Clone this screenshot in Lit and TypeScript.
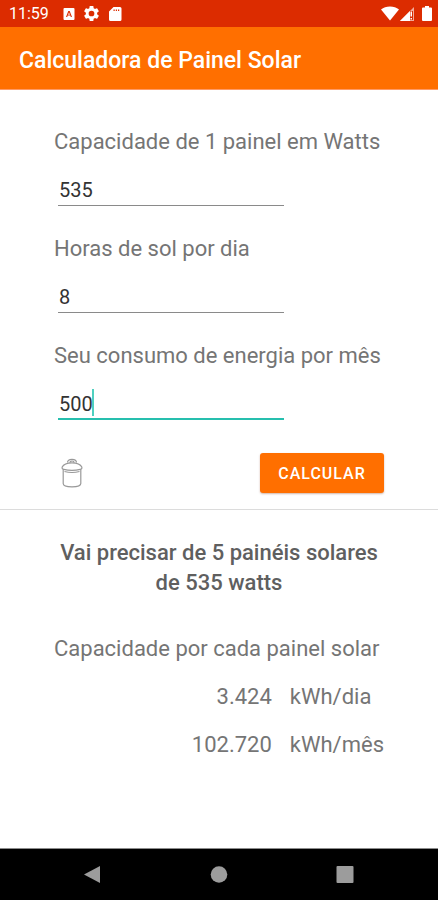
import { LitElement, html, css, svg } from "lit";
import { customElement, state } from "lit/decorators.js";

interface Field {
  id: string;
  label: string;
  value: string;
}

@customElement("status-bar")
class StatusBar extends LitElement {
  static styles = css`
    :host {
      display: flex;
      align-items: center;
      height: 27px;
      padding: 0 6px 0 9px;
      background: #dc2c00;
      color: #fff;
      font-size: 16px;
      line-height: 29px;
    }
    .notes {
      display: flex;
      align-items: center;
      gap: 9px;
      margin-left: 14px;
    }
    .signals {
      display: flex;
      align-items: center;
      margin-left: auto;
    }
    svg {
      display: block;
    }
    .battery {
      margin-left: 7px;
    }
  `;

  render() {
    return html`
      <span>11:59</span>
      <div class="notes">
        <svg width="12" height="14" viewBox="0 0 12 14">
          <path fill="#fff" fill-rule="evenodd" d="M1.500 1h9A1 1 0 0 1 11.500 2v10a1 1 0 0 1-1 1h-9A1 1 0 0 1 .5 12V2a1 1 0 0 1 1-1zM5.300 4 3 10h1.200l.5-1.400h2.600L7.800 10H9L6.700 4zM6 5.300l.9 2.400H5.100z" />
        </svg>
        <svg width="15" height="15" viewBox="2 2 20 20">
          <path fill="#fff" fill-rule="evenodd" d="M19.430 12.980c.04-.32.07-.64.07-.98s-.03-.66-.07-.98l2.110-1.650c.19-.15.24-.42.12-.64l-2-3.460c-.12-.22-.39-.3-.61-.22l-2.490 1c-.52-.4-1.080-.73-1.690-.98l-.38-2.650C14.460 2.180 14.250 2 14 2h-4c-.25 0-.46.18-.49.42l-.38 2.650c-.61.25-1.170.59-1.690.98l-2.490-1c-.23-.09-.49 0-.61.22l-2 3.460c-.13.22-.07.49.12.64l2.110 1.650c-.04.32-.07.65-.07.98s.03.66.07.98l-2.110 1.650c-.19.15-.24.42-.12.64l2 3.460c.12.22.39.3.61.22l2.490-1c.52.4 1.080.73 1.690.98l.38 2.650c.03.24.24.42.49.42h4c.25 0 .46-.18.49-.42l.38-2.650c.61-.25 1.170-.59 1.690-.98l2.490 1c.23.09.49 0 .61-.22l2-3.460c.12-.22.07-.49-.12-.64zM12 15.800a3.800 3.800 0 1 1 0-7.600 3.800 3.800 0 0 1 0 7.600z" />
        </svg>
        <svg width="14" height="16" viewBox="0 0 14 16">
          <path fill="#fff" fill-rule="evenodd" d="M5.500 1H12a1.500 1.500 0 0 1 1.500 1.500v11A1.500 1.500 0 0 1 12 15H2.500A1.500 1.500 0 0 1 1 13.500V5.500zM5.500 3.500V5h1.200V3.500zM7.800 3.500V5H9V3.500zM10 3.500V5h1.200V3.500z" />
        </svg>
      </div>
      <div class="signals">
        <svg width="18" height="15" viewBox="0 0 18 15">
          <path fill="#fff" d="M9 14.500 0 3.600C2.400 1.500 5.500.5 9 .5s6.600 1 9 3.100z" />
        </svg>
        <svg width="16" height="15" viewBox="0 0 16 15">
          <path fill="#fff" fill-opacity=".6" d="M15 1v14H1z" />
          <path fill="#fff" d="M11 5v10H1z" />
          <path fill="#dc2c00" d="M11 5h3v9h-3z" />
          <path fill="#fff" d="M11.500 5.500H13v5h-1.500zM11.500 12H13v1.500h-1.500z" />
        </svg>
        <svg class="battery" width="10" height="15" viewBox="0 0 10 15">
          <path fill="#fff" d="M3 0h4v1.500h2a1 1 0 0 1 1 1V14a1 1 0 0 1-1 1H1a1 1 0 0 1-1-1V2.500a1 1 0 0 1 1-1h2z" />
        </svg>
      </div>
    `;
  }
}

@customElement("nav-bar")
class NavBar extends LitElement {
  static styles = css`
    :host {
      display: flex;
      justify-content: center;
      gap: 86px;
      height: 51px;
      border-top: 1px solid #8c8c8c;
      background: #000;
    }
    button {
      display: flex;
      align-items: center;
      justify-content: center;
      width: 40px;
      padding: 0;
      border: 0;
      background: none;
    }
  `;

  render() {
    const shapes = [
      { name: "Voltar", shape: svg`<path d="M0 9.500 16 1v17z" />` },
      { name: "Início", shape: svg`<circle cx="9" cy="9.500" r="8.300" />` },
      { name: "Recentes", shape: svg`<rect x="0.500" y="1" width="17" height="17" rx="1" />` },
    ];
    return shapes.map(
      (s) => html`<button aria-label=${s.name}>
        <svg width="18" height="19" viewBox="0 0 18 19" fill="#9c9c9c">${s.shape}</svg>
      </button>`
    );
  }
}

@customElement("app-root")
class AppRoot extends LitElement {
  @state() private fields: Field[] = [
    { id: "capacidade", label: "Capacidade de 1 painel em Watts", value: "535" },
    { id: "horas", label: "Horas de sol por dia", value: "8" },
    { id: "consumo", label: "Seu consumo de energia por mês", value: "500" },
  ];
  @state() private active = "consumo";

  static styles = css`
    :host {
      display: flex;
      flex-direction: column;
      min-height: 100vh;
      background: #fff;
      color: #757575;
      font-family: Roboto, "Liberation Sans", sans-serif;
    }
    h1 {
      margin: 0;
      padding: 5px 19px 0;
      background: #ff6f00;
      border-bottom: 1px solid #ff9a66;
      color: #fff;
      font-size: 23px;
      font-weight: 500;
      line-height: 57px;
    }
    main {
      flex: 1;
    }
    form {
      padding: 37px 54px 16px;
      border-bottom: 1px solid #dcdcdc;
    }
    .field {
      display: flex;
      flex-direction: column;
      gap: 15px;
      margin-bottom: 28px;
    }
    label,
    .results {
      font-size: 22px;
      font-weight: 400;
      line-height: 30px;
    }
    label {
      white-space: nowrap;
    }
    .entry {
      position: relative;
      width: 226px;
      margin-left: 4px;
    }
    input {
      display: block;
      box-sizing: border-box;
      width: 100%;
      height: 34px;
      padding: 2px 0 0 1px;
      border: 0;
      border-bottom: 1px solid #8a8a8a;
      outline: 0;
      background: none;
      color: #333;
      font-family: inherit;
      font-size: 20px;
      font-weight: 400;
      caret-color: transparent;
    }
    .active input {
      padding-top: 3px;
      border-bottom: 2px solid #26bfae;
    }
    .caret {
      position: absolute;
      top: 3px;
      left: 34px;
      width: 2px;
      height: 27px;
      background: #4fd0c0;
    }
    .actions {
      display: flex;
      justify-content: space-between;
      align-items: center;
      margin-top: 33px;
    }
    button {
      padding: 0;
      border: 0;
      background: none;
      font-family: inherit;
    }
    .clear {
      display: flex;
      justify-content: center;
      width: 36px;
    }
    .calc {
      width: 124px;
      height: 40px;
      border-radius: 3px;
      background: #ff6f00;
      box-shadow: 0 1px 2px rgba(120, 40, 0, 0.35);
      color: #fff;
      font-size: 16px;
      font-weight: 500;
      letter-spacing: 1px;
    }
    .results {
      padding: 28px 54px;
    }
    h2 {
      margin: 0 0 36px;
      color: #5f5f5f;
      font-size: 22px;
      font-weight: 500;
      line-height: 30px;
      text-align: center;
    }
    table {
      margin-left: auto;
      border-spacing: 0;
    }
    td {
      padding: 18px 0 0 18px;
    }
    .amount {
      text-align: right;
    }
  `;

  render() {
    return html`
      <status-bar></status-bar>
      <h1>Calculadora de Painel Solar</h1>
      <main>
        <form @submit=${(e: Event) => e.preventDefault()}>
          ${this.fields.map(
            (f) => html`<div class="field ${f.id === this.active ? "active" : ""}">
              <label for=${f.id}>${f.label}</label>
              <div class="entry">
                <input id=${f.id} inputmode="numeric" .value=${f.value} @focus=${() => (this.active = f.id)} />
                ${f.id === this.active ? html`<span class="caret"></span>` : ""}
              </div>
            </div>`
          )}
          <div class="actions">
            <button class="clear" type="button" aria-label="Limpar">
              <svg width="22" height="30" viewBox="0 0 22 30" fill="none" stroke="#999" stroke-width="1.200">
                <path d="M6.500 4.500c0-2 1.500-3.200 4.500-3.200s4.500 1.200 4.500 3.200M9 4.800c0-1.200.8-1.800 2-1.800s2 .6 2 1.800" />
                <path d="M1.200 9C2.500 6.300 6 4.800 11 4.800S19.500 6.300 20.800 9c.4 1.400-.2 2.100-1.500 2.400-4.700 1-11.900 1-16.600 0C1.400 11.100.8 10.400 1.200 9z" />
                <path d="M2.200 12v13.500c0 2.200 3.500 3.300 8.800 3.300s8.800-1.100 8.800-3.300V12M3.500 13.500c4.500 1.200 10.500 1.200 15 0" />
              </svg>
            </button>
            <button class="calc" type="submit">CALCULAR</button>
          </div>
        </form>
        <section class="results">
          <h2>Vai precisar de 5 painéis solares de 535 watts</h2>
          <div>Capacidade por cada painel solar</div>
          <table>
            <tr><td class="amount">3.424</td><td>kWh/dia</td></tr>
            <tr><td class="amount">102.720</td><td>kWh/mês</td></tr>
          </table>
        </section>
      </main>
      <nav-bar></nav-bar>
    `;
  }
}
